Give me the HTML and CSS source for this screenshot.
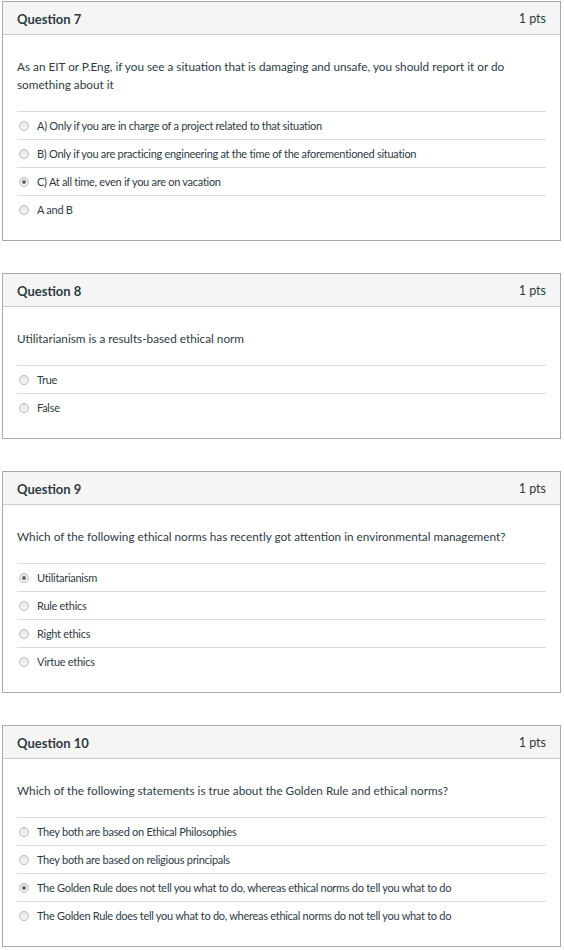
FILE: index.html
```html
<!DOCTYPE html>
<html>
<head>
<meta charset="utf-8">
<link rel="stylesheet" href="styles.css">
</head>
<body>
<div class="quiz">
  <section class="card">
    <header class="card-head"><span class="q-title">Question 7</span><span class="q-pts">1 pts</span></header>
    <div class="card-body">
      <p class="q-text">As an EIT or P.Eng, if you see a situation that is damaging and unsafe, you should report it or do something about it</p>
      <ul class="answers">
        <li class="answer"><span class="radio"></span>A) Only if you are in charge of a project related to that situation</li>
        <li class="answer"><span class="radio"></span>B) Only if you are practicing engineering at the time of the aforementioned situation</li>
        <li class="answer"><span class="radio checked"></span>C) At all time, even if you are on vacation</li>
        <li class="answer"><span class="radio"></span>A and B</li>
      </ul>
    </div>
  </section>
  <section class="card">
    <header class="card-head"><span class="q-title">Question 8</span><span class="q-pts">1 pts</span></header>
    <div class="card-body">
      <p class="q-text">Utilitarianism is a results-based ethical norm</p>
      <ul class="answers">
        <li class="answer"><span class="radio"></span>True</li>
        <li class="answer"><span class="radio"></span>False</li>
      </ul>
    </div>
  </section>
  <section class="card">
    <header class="card-head"><span class="q-title">Question 9</span><span class="q-pts">1 pts</span></header>
    <div class="card-body">
      <p class="q-text">Which of the following ethical norms has recently got attention in environmental management?</p>
      <ul class="answers">
        <li class="answer"><span class="radio checked"></span>Utilitarianism</li>
        <li class="answer"><span class="radio"></span>Rule ethics</li>
        <li class="answer"><span class="radio"></span>Right ethics</li>
        <li class="answer"><span class="radio"></span>Virtue ethics</li>
      </ul>
    </div>
  </section>
  <section class="card">
    <header class="card-head"><span class="q-title">Question 10</span><span class="q-pts">1 pts</span></header>
    <div class="card-body">
      <p class="q-text">Which of the following statements is true about the Golden Rule and ethical norms?</p>
      <ul class="answers">
        <li class="answer"><span class="radio"></span>They both are based on Ethical Philosophies</li>
        <li class="answer"><span class="radio"></span>They both are based on religious principals</li>
        <li class="answer"><span class="radio checked"></span>The Golden Rule does not tell you what to do, whereas ethical norms do tell you what to do</li>
        <li class="answer"><span class="radio"></span>The Golden Rule does tell you what to do, whereas ethical norms do not tell you what to do</li>
      </ul>
    </div>
  </section>
</div>
</body>
</html>
```

FILE: styles.css
```css
html, body {
  margin: 0;
  padding: 0;
  background: #fff;
}
body {
  font-family: Lato, "Open Sans", sans-serif;
  color: #2d3b45;
}
.quiz {
  padding: 1px 0 0 2px;
  width: 559px;
  display: flex;
  flex-direction: column;
  gap: 32px;
}
.card {
  border: 1px solid #a9a9a9;
  background: #fff;
}
.card-head {
  height: 33px;
  box-sizing: border-box;
  background: #f5f5f5;
  border-bottom: 1px solid #c7cdd1;
  display: flex;
  align-items: center;
  justify-content: space-between;
  padding: 1px 14px 0;
}
.q-title {
  font-weight: 700;
  font-size: 13px;
}
.q-pts {
  font-size: 12.5px;
}
.card-body {
  padding: 23px 14px 17px;
}
.q-text {
  margin: 0 0 17px;
  font-size: 11.75px;
  line-height: 18px;
}
.answers {
  list-style: none;
  margin: 0;
  padding: 0;
}
.answer {
  border-top: 1px solid #dadde0;
  height: 27px;
  display: flex;
  align-items: center;
  font-size: 11px;
  letter-spacing: -0.28px;
  padding-left: 2px;
}
.radio {
  width: 8px;
  height: 8px;
  border-radius: 50%;
  border: 1px solid #b9bcbe;
  background: linear-gradient(#e6e6e6, #f6f6f6);
  margin-right: 8px;
  flex: none;
  position: relative;
}
.radio.checked::after {
  content: "";
  position: absolute;
  left: 2px;
  top: 2px;
  width: 4px;
  height: 4px;
  border-radius: 50%;
  background: #6a6a6a;
}
```
